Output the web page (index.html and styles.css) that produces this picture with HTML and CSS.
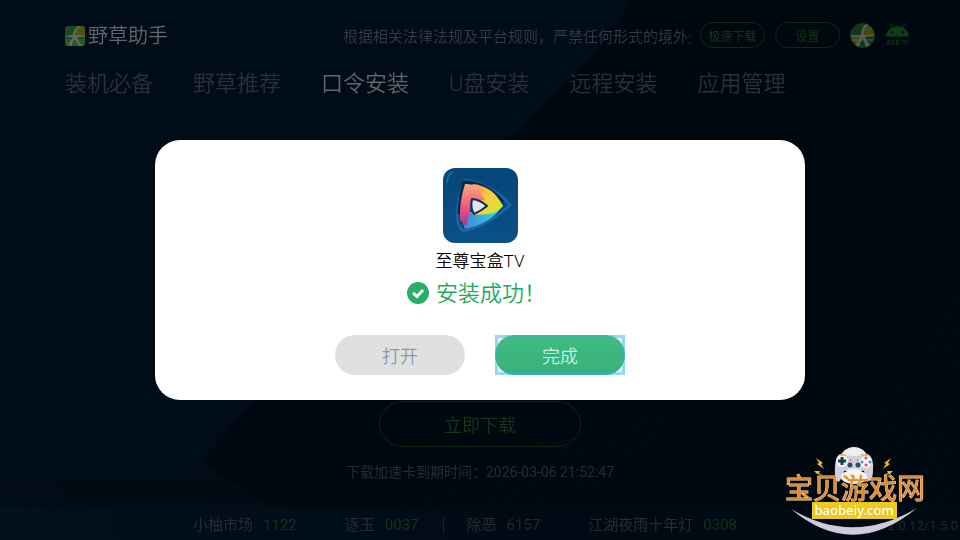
FILE: index.html
```html
<!DOCTYPE html>
<html lang="zh-CN">
<head>
    <meta charset="UTF-8">
    <meta name="viewport" content="width=device-width, initial-scale=1.0">
    <title>野草助手</title>
    <link rel="stylesheet" href="styles.css">
</head>
<body>
    <!-- 背景 -->
    <svg class="backdrop" viewBox="0 0 960 540" preserveAspectRatio="none" aria-hidden="true">
        <defs>
            <pattern id="wave" width="80" height="6" patternUnits="userSpaceOnUse" patternTransform="rotate(-22)">
                <path d="M0 3 Q20 1 40 3 T80 3" fill="none" stroke="#021722" stroke-width="1"/>
            </pattern>
            <linearGradient id="shade" x1="0" y1="0" x2="0" y2="1">
                <stop offset="0" stop-color="#000d18"/>
                <stop offset=".8" stop-color="#000d18"/>
                <stop offset="1" stop-color="#000a12"/>
            </linearGradient>
        </defs>
        <path d="M0 0 H632 C600 55 560 90 505 140 L255 400 L200 462 L270 506 V540 H0 Z" fill="url(#shade)"/>
        <path d="M0 430 Q70 520 190 540 H0 Z M170 540 Q420 520 560 430 L700 400 Q560 540 480 540 Z M760 540 Q880 430 960 280 V540 Z" fill="url(#wave)" opacity=".35"/>
    </svg>

    <div class="page">
        <header class="header">
            <h1 class="brand">
                <svg class="brand-icon" viewBox="0 0 20 20" aria-hidden="true">
                    <rect width="20" height="20" rx="3" fill="#1d4a22"/>
                    <path d="M12 0H17Q20 0 20 3V10H10Z" fill="#4c5611"/>
                    <path d="M0 13H20V17Q20 20 17 20H3Q0 20 0 17Z" fill="#285b24"/>
                    <path d="M14 0Q8 3 8 9Q4 9 0 10V11Q5 10 8 12Q4 15 4 20H7Q7 15 10 13L14 20H18Q14 16 12 12Q16 10 20 11V10Q16 9 10 9Q11 4 16 0Z" fill="#62675f"/>
                </svg>
                野草助手
            </h1>
            <p class="notice">根据相关法律法规及平台规则，严禁任何形式的境外违</p>
            <div class="tools">
                <button class="pill" type="button">极速下载</button>
                <button class="pill" type="button">设置</button>
                <svg class="avatar" viewBox="0 0 25 25" aria-hidden="true">
                    <circle cx="12.5" cy="12.5" r="12.5" fill="#12381b"/>
                    <path d="M16 1Q23 4 24 12H14Z" fill="#464b0d"/>
                    <path d="M1 14H11L8 22Q2 19 1 14Z" fill="#3f4b17"/>
                    <path d="M16 1Q11 4 11 12L1 12V13.500L10 14Q8 19 5 22L9 24Q10 19 13 16L16 24L20 22Q16 18 15 14L24 13V12L14 12Q14 5 18 2Z" fill="#575a54"/>
                    <path d="M2 17H9M16 17H23" stroke="#575a54" stroke-width="1"/>
                </svg>
                <svg class="adb" viewBox="0 0 24 24" aria-hidden="true">
                    <path d="M1 13A11 10 0 0 1 23 13Z" fill="#0f3a16"/>
                    <path d="M5 1L8 5M19 1L16 5" stroke="#0f3a16" stroke-width="1"/>
                    <circle cx="7" cy="9" r="1" fill="#000912"/>
                    <circle cx="17" cy="9" r="1" fill="#000912"/>
                    <text class="adb-text" x="1" y="21">ADB</text>
                    <path d="M16 18Q19.500 15.500 23 18M17.500 20Q19.500 18.500 21.500 20M19 21.500H20" stroke="#12351a" fill="none"/>
                </svg>
            </div>
        </header>

        <nav class="tabs">
            <a href="#">装机必备</a>
            <a href="#">野草推荐</a>
            <a class="active" href="#">口令安装</a>
            <a href="#">U盘安装</a>
            <a href="#">远程安装</a>
            <a href="#">应用管理</a>
        </nav>

        <main class="content">
            <button class="download" type="button">立即下载</button>
            <p class="expire">下载加速卡到期时间：2026-03-06 21:52:47</p>
        </main>

        <footer class="footer">
            <ul class="codes">
                <li>小柚市场<span>1122</span></li>
                <li>逐玉<span>0037</span></li>
                <li class="divided">除恶<span>6157</span></li>
                <li>江湖夜雨十年灯<span>0308</span></li>
            </ul>
            <span class="version">2.0.12/1.5.0</span>
        </footer>
    </div>

    <!-- 安装结果弹窗 -->
    <div class="overlay">
        <section class="dialog" role="dialog" aria-labelledby="app-name">
            <svg class="app-icon" viewBox="0 0 75 75" aria-hidden="true">
                <defs>
                    <linearGradient id="tile" x1="0" y1="0" x2="0" y2="1">
                        <stop offset="0" stop-color="#064678"/>
                        <stop offset="1" stop-color="#0b5088"/>
                    </linearGradient>
                    <linearGradient id="pink" x1="0" y1="0" x2="0" y2="1">
                        <stop offset="0" stop-color="#f9a882"/>
                        <stop offset=".4" stop-color="#f46f7b"/>
                        <stop offset=".7" stop-color="#e04484"/>
                        <stop offset="1" stop-color="#9c3a8c"/>
                    </linearGradient>
                    <linearGradient id="gold" x1="0" y1="0" x2="1" y2="1">
                        <stop offset="0" stop-color="#fb925f"/>
                        <stop offset=".5" stop-color="#f7ce3c"/>
                        <stop offset="1" stop-color="#c5ee35"/>
                    </linearGradient>
                    <linearGradient id="aqua" x1="0" y1="0" x2="1" y2="0">
                        <stop offset="0" stop-color="#4c7fd2"/>
                        <stop offset=".5" stop-color="#3ca8e4"/>
                        <stop offset="1" stop-color="#2fe5cf"/>
                    </linearGradient>
                </defs>
                <rect width="75" height="75" rx="12" fill="url(#tile)"/>
                <path d="M4 15Q4 7 10 4" stroke="#1c659b" stroke-width="2" fill="none"/>
                <path d="M22 12Q15 30 14 49Q15 58 20 63Q45 58 67 37Q50 17 22 12Z" fill="#0d4780" stroke="#1765a3" stroke-width="3" stroke-linejoin="round"/>
                <path d="M16 46Q17 29 21 14Q43 14 60 34" stroke="#082747" stroke-width="3" fill="none" stroke-linejoin="round"/>
                <path d="M18 50L26 44L32 44L44 46L57 41Q46 56 22 61Z" fill="url(#aqua)"/>
                <path d="M30 16Q50 18 60 38Q57 43 46 46L31 47L43 38L29 31L26 22Z" fill="url(#gold)"/>
                <path d="M22 16Q30 16 37 20Q37 26 42 32L28 32L27 42L23 58L17 52Q16 35 22 16Z" fill="url(#pink)"/>
                <path d="M29 31Q38 32 44 38Q38 43 31 46Q27 40 29 31Z" fill="#dde4ee" stroke="#142c4d" stroke-width="2" stroke-linejoin="round"/>
            </svg>
            <h2 class="app-name" id="app-name">至尊宝盒TV</h2>
            <p class="result">
                <svg class="check" viewBox="0 0 22 22" aria-hidden="true">
                    <circle cx="11" cy="11" r="11" fill="#28ae66"/>
                    <path d="M6 11L10 14.500L16 8" fill="none" stroke="#fff" stroke-width="3"/>
                </svg>
                安装成功！
            </p>
            <div class="actions">
                <button class="action" type="button">打开</button>
                <button class="action primary" type="button">完成</button>
            </div>
        </section>
    </div>

    <!-- 站点角标 -->
    <svg class="badge" viewBox="0 0 140 90" role="img" aria-label="宝贝游戏网 baobeiy.com">
        <ellipse cx="69" cy="14" rx="14" ry="13" fill="#eeeeef"/>
        <path d="M55 8Q69 12 83 8Q89 12 88 24Q88 34 84 35Q80 34 79 25Q69 20 59 25Q57 34 53 36Q49 34 50 20Q51 10 55 8Z" fill="#cfd0dc"/>
        <circle cx="57" cy="15" r="6" fill="#f5f5f7"/>
        <circle cx="81" cy="16" r="6" fill="#f5f5f7"/>
        <path d="M57 11V19M53 15H61" stroke="#173f4c" stroke-width="3"/>
        <path d="M55 9H61M76 9H83" stroke="#e4b340" stroke-width="1.500"/>
        <circle cx="81" cy="12" r="1.500" fill="#e44a58"/>
        <circle cx="81" cy="19" r="1.500" fill="#e44a58"/>
        <circle cx="77" cy="16" r="1.500" fill="#4894bd"/>
        <circle cx="85" cy="16" r="1.500" fill="#4894bd"/>
        <circle cx="65" cy="19" r="2.500" fill="#28505e"/>
        <circle cx="73" cy="19" r="2.500" fill="#28505e"/>
        <path d="M65 14H66M72 14H73" stroke="#e44a58" stroke-width="1.500"/>
        <ellipse cx="69" cy="31" rx="13" ry="7" fill="#f7f6f4"/>
        <path d="M31 12L38 17L36 18L39 23L32 18L34 17ZM29 25L35 25L34 27L38 29L32 28Z" fill="#f2b52a"/>
        <path d="M106 12L99 17L101 18L98 23L105 18L103 17ZM108 25L102 25L103 27L99 29L105 28Z" fill="#f2b52a"/>
        <path d="M6 63Q68 115 132 62Q68 100 6 63Z" fill="#cdcbdc"/>
        <rect x="27" y="56" width="85" height="17" fill="#eec922"/>
        <text class="badge-name" x="70" y="53">宝贝游戏网</text>
        <text class="badge-site" x="69" y="69">baobeiy.com</text>
    </svg>
</body>
</html>
```
FILE: styles.css
```css
* {
    box-sizing: border-box;
}
body {
    margin: 0;
    background: #00080f;
    color: #262c34;
    font-family: Roboto, "Noto Sans CJK SC", sans-serif;
    font-weight: 350;
}
h1, h2, p, ul {
    margin: 0;
    padding: 0;
    font-weight: inherit;
}
button {
    padding: 0;
    border: none;
    background: none;
    font-family: inherit;
    font-weight: inherit;
    cursor: pointer;
}
.backdrop {
    position: fixed;
    inset: 0;
    width: 100%;
    height: 100%;
}
.page {
    position: relative;
    display: flex;
    flex-direction: column;
    min-height: 100vh;
}

/* 顶部 */
.header {
    display: flex;
    align-items: center;
    padding: 21px 50px 0 65px;
}
.brand {
    display: flex;
    align-items: center;
    gap: 3px;
    padding-top: 2px;
    color: #63676a;
    font-size: 20px;
    line-height: 26px;
    white-space: nowrap;
}
.brand-icon {
    width: 20px;
    height: 20px;
}
.notice {
    width: 347px;
    margin: 0 10px 0 auto;
    padding-top: 4px;
    overflow: hidden;
    color: #343b42;
    font-size: 15px;
    line-height: 24px;
    white-space: nowrap;
}
.tools {
    display: flex;
    align-items: center;
    gap: 10px;
}
.pill {
    width: 65px;
    height: 26px;
    border: 1px solid #0c2c16;
    border-radius: 13px;
    color: #183c1c;
    font-size: 12px;
}
.avatar {
    width: 25px;
    height: 25px;
}
.adb {
    width: 25px;
    height: 25px;
}
.adb-text {
    fill: #12351a;
    font-size: 7px;
    font-weight: 500;
}

/* 导航 */
.tabs {
    display: flex;
    gap: 40px;
    padding: 19px 65px 0;
    font-size: 22px;
    line-height: 32px;
    white-space: nowrap;
}
.tabs a {
    color: #2a3138;
    text-decoration: none;
}
.tabs .active {
    color: #636668;
}

.content {
    flex: 1;
    display: flex;
    flex-direction: column;
    align-items: center;
    justify-content: flex-end;
    gap: 15px;
    padding-bottom: 24px;
}
.download {
    width: 202px;
    height: 46px;
    border: 1px solid #0c2716;
    border-radius: 23px;
    color: #15381b;
    font-size: 18px;
}
.expire {
    font-size: 14px;
    font-weight: 400;
    line-height: 20px;
}

/* 底部口令 */
.footer {
    display: flex;
    align-items: center;
    justify-content: space-between;
    height: 34px;
    padding: 4px 2px 0 169px;
    background: linear-gradient(90deg, #01101c, #000a14 60%, #000a12);
    font-weight: 400;
    white-space: nowrap;
}
.codes {
    display: flex;
    font-size: 15px;
    line-height: 16px;
    list-style: none;
}
.codes li {
    padding: 0 24px 0 23px;
    border-left: 1px solid transparent;
}
.codes .divided {
    border-color: #1a242c;
}
.codes span {
    margin-left: 10px;
    color: #16321c;
}
.version {
    color: #20272e;
    font-size: 13px;
}

/* 弹窗 */
.overlay {
    position: fixed;
    inset: 0;
    display: grid;
    place-items: center;
}
.dialog {
    display: flex;
    flex-direction: column;
    align-items: center;
    width: 68%;
    max-width: 650px;
    padding: 28px 20px 25px;
    border-radius: 25px;
    background: #fff;
}
.app-icon {
    width: 75px;
    height: 75px;
}
.app-name {
    margin-top: 6px;
    color: #000;
    font-size: 17px;
    line-height: 24px;
}
.result {
    display: flex;
    align-items: center;
    gap: 7px;
    padding-right: 7px;
    margin-top: 5px;
    color: #22aa60;
    font-size: 22px;
    line-height: 32px;
}
.check {
    width: 22px;
    height: 22px;
    margin-bottom: 2px;
}
.actions {
    display: flex;
    gap: 30px;
    margin-top: 25px;
}
.action {
    position: relative;
    width: 130px;
    height: 40px;
    border-radius: 20px;
    background: #e0e0e0;
    color: #8c99a6;
    font-size: 18px;
}
.primary {
    background: linear-gradient(#43bd70, #38b068);
    color: #e4faec;
}
/* 焦点框 */
.primary::after {
    content: "";
    position: absolute;
    inset: 0;
    border: 3px solid rgba(51, 175, 220, 0.5);
    background: rgba(51, 181, 229, 0.15);
    background-clip: padding-box;
}

/* 角标 */
.badge {
    position: fixed;
    right: 35px;
    bottom: 4px;
    width: 140px;
    height: 90px;
}
.badge-name {
    fill: #e98a28;
    stroke: #f6dcb4;
    stroke-width: 1px;
    paint-order: stroke;
    font-size: 28px;
    font-weight: 400;
    text-anchor: middle;
}
.badge-site {
    fill: #fff;
    font-family: "Noto Sans", sans-serif;
    font-size: 13px;
    font-weight: 500;
    text-anchor: middle;
}
```
